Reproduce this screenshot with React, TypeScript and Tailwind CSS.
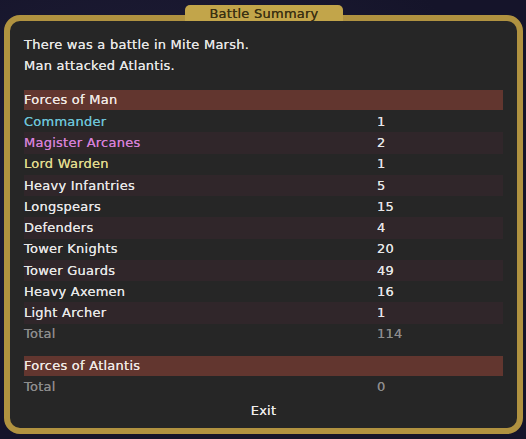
const units: { name: string; count: number; color?: string }[] = [
  { name: 'Commander', count: 1, color: 'text-[#6cc3d6]' },
  { name: 'Magister Arcanes', count: 2, color: 'text-[#d47fd6]' },
  { name: 'Lord Warden', count: 1, color: 'text-[#e0d98c]' },
  { name: 'Heavy Infantries', count: 5 },
  { name: 'Longspears', count: 15 },
  { name: 'Defenders', count: 4 },
  { name: 'Tower Knights', count: 20 },
  { name: 'Tower Guards', count: 49 },
  { name: 'Heavy Axemen', count: 16 },
  { name: 'Light Archer', count: 1 },
];

function Row({ name, count, color, odd }: { name: string; count: number | string; color?: string; odd?: boolean }) {
  return (
    <div className={`flex h-[21.25px] items-center ${odd ? 'bg-[#30262a]' : ''}`}>
      <span className={`w-[353px] ${color ?? 'text-[#e6e6e6]'}`}>{name}</span>
      <span className="text-[#e6e6e6]">{count}</span>
    </div>
  );
}

function Header({ label }: { label: string }) {
  return <div className="flex h-[20px] items-center bg-[#62362f] text-[#f0e8e4]">{label}</div>;
}

export default function App() {
  return (
    <div
      className="h-[439px] w-[526px] bg-[radial-gradient(ellipse_at_30%_40%,#22203a,#15142a_70%)] pt-[5px] pl-[4px] text-[13px] tracking-[0.25px] [text-shadow:0_0_0.5px_currentColor]"
      style={{ fontFamily: '"DejaVu Sans", sans-serif' }}
    >
      <div className="relative h-[433px] w-[519px]">
        <div className="absolute inset-x-0 bottom-[4px] top-[10px] rounded-[16px] border-[6px] border-[#b09240] bg-[#262626] px-[14px] pt-[13px]">
          <div className="leading-[21px] text-[#e6e6e6]">
            <p>There was a battle in Mite Marsh.</p>
            <p>Man attacked Atlantis.</p>
          </div>
          <div className="mt-[14px] w-[479px]">
            <Header label="Forces of Man" />
            <div className="pt-[1px]">
              {units.map((u, i) => (
                <Row key={u.name} name={u.name} count={u.count} color={u.color} odd={i % 2 === 1} />
              ))}
            </div>
            <div className="flex h-[21.25px] items-center text-[#8c8c8c]">
              <span className="w-[353px]">Total</span>
              <span>114</span>
            </div>
            <div className="mt-[11px]">
              <Header label="Forces of Atlantis" />
            </div>
            <div className="flex h-[21px] items-center text-[#8c8c8c]">
              <span className="w-[353px]">Total</span>
              <span>0</span>
            </div>
          </div>
          <div className="mt-[4px] text-center text-[#ececec]">Exit</div>
        </div>
        <div className="absolute left-[181px] top-0 flex h-[16px] w-[158px] items-center justify-center rounded-t-[5px] bg-[#c2a54a] text-[13px] leading-[16px] text-[#3b3112]">
          <span className="mt-[2px]">Battle Summary</span>
        </div>
      </div>
    </div>
  );
}
